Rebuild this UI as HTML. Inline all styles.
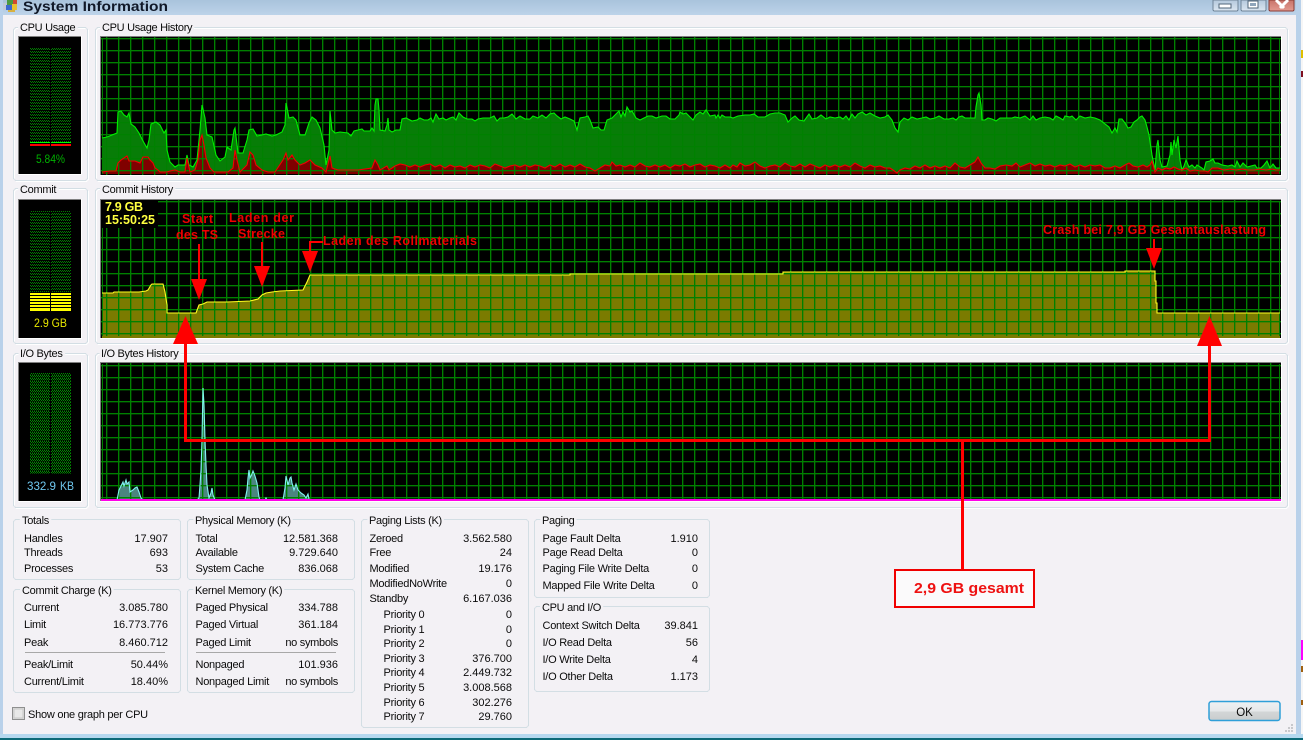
<!DOCTYPE html>
<html><head><meta charset="utf-8"><title>System Information</title>
<style>
html,body{margin:0;padding:0;width:1303px;height:740px;overflow:hidden;background:#f3f1f5}
svg{display:block;position:absolute;left:0;top:0}
text{font-family:"Liberation Sans",Arial,sans-serif;font-size:11px;fill:#0a0a0a;letter-spacing:-.25px}
.r{text-anchor:end;letter-spacing:0}
.t{paint-order:stroke;stroke:#f3f1f5;stroke-width:5px;letter-spacing:-.3px}
.a{font-weight:bold;font-size:12.5px;fill:#f00000;letter-spacing:0}
</style></head><body>
<svg width="1303" height="740" viewBox="0 0 1303 740" shape-rendering="crispEdges">
<defs>
<linearGradient id="tb" x1="0" y1="0" x2="0" y2="1"><stop offset="0" stop-color="#a9c3dc"/><stop offset="1" stop-color="#bdd3e9"/></linearGradient>
<linearGradient id="btn" x1="0" y1="0" x2="0" y2="1"><stop offset="0" stop-color="#eef1f3"/><stop offset=".5" stop-color="#e6e8ea"/><stop offset=".55" stop-color="#d3d6d7"/><stop offset="1" stop-color="#c9cccd"/></linearGradient>
<linearGradient id="wb" x1="0" y1="0" x2="0" y2="1"><stop offset="0" stop-color="#b4c8dc"/><stop offset="1" stop-color="#dbe6f1"/></linearGradient>
<linearGradient id="wr" x1="0" y1="0" x2="0" y2="1"><stop offset="0" stop-color="#c8746a"/><stop offset="1" stop-color="#e39a90"/></linearGradient>
<pattern id="g1" patternUnits="userSpaceOnUse" x="106" y="38" width="12" height="12"><rect x="1" y="0" width="1" height="12" fill="#008000" opacity=".35"/><rect x="0" y="1" width="12" height="1" fill="#008000" opacity=".35"/><rect x="0" y="0" width="1" height="12" fill="#008000"/><rect x="0" y="0" width="12" height="1" fill="#008000"/></pattern>
<pattern id="g2" patternUnits="userSpaceOnUse" x="106" y="201" width="12" height="12"><rect x="1" y="0" width="1" height="12" fill="#008000" opacity=".35"/><rect x="0" y="1" width="12" height="1" fill="#008000" opacity=".35"/><rect x="0" y="0" width="1" height="12" fill="#008000"/><rect x="0" y="0" width="12" height="1" fill="#008000"/></pattern>
<pattern id="g3" patternUnits="userSpaceOnUse" x="106" y="365" width="12" height="12"><rect x="1" y="0" width="1" height="12" fill="#008000" opacity=".35"/><rect x="0" y="1" width="12" height="1" fill="#008000" opacity=".35"/><rect x="0" y="0" width="1" height="12" fill="#008000"/><rect x="0" y="0" width="12" height="1" fill="#008000"/></pattern>
<pattern id="d" patternUnits="userSpaceOnUse" x="0" y="0" width="2" height="3"><rect x="0" y="0" width="1" height="1" fill="#008000"/><rect x="1" y="1" width="1" height="1" fill="#008000"/></pattern>
<pattern id="d2" patternUnits="userSpaceOnUse" x="0" y="0" width="2" height="3"><rect x="0" y="0" width="1" height="1" fill="#009000"/><rect x="1" y="1" width="1" height="1" fill="#009000"/><rect x="0" y="2" width="1" height="1" fill="#005000"/></pattern>
</defs>

<!-- window chrome -->
<rect x="0" y="0" width="1303" height="740" fill="#f3f1f5"/>
<rect x="0" y="0" width="1303" height="15" fill="url(#tb)"/>
<rect x="0" y="0" width="3" height="740" fill="#b9d1ea"/>
<rect x="1296" y="0" width="5" height="740" fill="#b9d1ea"/>
<rect x="1301" y="0" width="2" height="740" fill="#f6f6f6"/>
<rect x="1301" y="50" width="2" height="8" fill="#e0c000"/>
<rect x="1301" y="71" width="2" height="6" fill="#801020"/>
<rect x="1301" y="640" width="2" height="20" fill="#ff00ff"/>
<rect x="1301" y="666" width="2" height="6" fill="#a06010"/>
<rect x="1301" y="700" width="2" height="5" fill="#a06010"/>
<rect x="0" y="734" width="1303" height="4" fill="#b5d8ef"/>
<rect x="0" y="738" width="1303" height="2" fill="#0c6a78"/>

<!-- title icon -->
<rect x="3" y="3" width="5" height="7" fill="#c0c8d8"/>
<rect x="7" y="0" width="6" height="5" fill="#4a9a40"/>
<rect x="13" y="0" width="4" height="4" fill="#d04a30"/>
<rect x="6" y="5" width="6" height="5" fill="#3a6ad0"/>
<rect x="12" y="4" width="5" height="6" fill="#e8c030"/>
<rect x="8" y="10" width="7" height="2" fill="#d8b040"/>
<text x="23" y="11" textLength="145" lengthAdjust="spacingAndGlyphs" style="font-size:14px;font-weight:bold;fill:#101828;letter-spacing:0">System Information</text>

<!-- window buttons -->
<g>
<path d="M1213 0V9q0 2 2 2H1236q2 0 2-2V0Z" fill="url(#wb)" stroke="#6f8498"/>
<rect x="1219" y="4" width="12" height="4" fill="#fff" stroke="#50667a"/>
<path d="M1241 0V9q0 2 2 2H1264q2 0 2-2V0Z" fill="url(#wb)" stroke="#6f8498"/>
<rect x="1248" y="1" width="10" height="7" fill="#fff" stroke="#50667a"/><rect x="1250" y="3" width="6" height="3" fill="#8fa5bb"/>
<path d="M1269 0V9q0 2 2 2H1292q2 0 2-2V0Z" fill="url(#wr)" stroke="#8a3d36"/>
<path d="M1276 0L1284 8M1288 0L1280 8" stroke="#fff" stroke-width="3" fill="none" shape-rendering="auto"/>
</g>

<!-- graph frames -->
<g fill="none" stroke="#fff">
<rect x="14.500" y="28.500" width="74" height="153" rx="3"/>
<rect x="96.500" y="28.500" width="1192" height="153" rx="3"/>
<rect x="14.500" y="189.500" width="74" height="155" rx="3"/>
<rect x="96.500" y="189.500" width="1192" height="155" rx="3"/>
<rect x="14.500" y="354.500" width="74" height="154" rx="3"/>
<rect x="96.500" y="354.500" width="1192" height="154" rx="3"/>
</g>
<g fill="none" stroke="#d3dee4">
<rect x="13.500" y="27.500" width="74" height="153" rx="3"/>
<rect x="95.500" y="27.500" width="1192" height="153" rx="3"/>
<rect x="13.500" y="188.500" width="74" height="155" rx="3"/>
<rect x="95.500" y="188.500" width="1192" height="155" rx="3"/>
<rect x="13.500" y="353.500" width="74" height="154" rx="3"/>
<rect x="95.500" y="353.500" width="1192" height="154" rx="3"/>
</g>
<text class="t" x="20" y="31">CPU Usage</text>
<text class="t" x="102" y="31">CPU Usage History</text>
<text class="t" x="20" y="193">Commit</text>
<text class="t" x="102" y="193">Commit History</text>
<text class="t" x="20" y="357">I/O Bytes</text>
<text class="t" x="101" y="357">I/O Bytes History</text>

<!-- meters -->
<g>
<rect x="18" y="36" width="64" height="139" fill="#fff"/><rect x="18" y="36" width="63" height="138" fill="#808080"/><rect x="19" y="37" width="62" height="137" fill="#000"/>
<rect x="30" y="48" width="20" height="94" fill="url(#d)"/><rect x="51" y="48" width="20" height="94" fill="url(#d)"/>
<rect x="30" y="142" width="20" height="1" fill="#00ff00"/><rect x="51" y="142" width="20" height="1" fill="#00ff00"/>
<rect x="30" y="144" width="20" height="2" fill="#ff0000"/><rect x="51" y="144" width="20" height="2" fill="#ff0000"/>
<text x="36" y="163" textLength="29" lengthAdjust="spacingAndGlyphs" style="font-size:12px;fill:#00b000;letter-spacing:0">5.84%</text>

<rect x="18" y="199" width="64" height="140" fill="#fff"/><rect x="18" y="199" width="63" height="139" fill="#808080"/><rect x="19" y="200" width="62" height="138" fill="#000"/>
<rect x="30" y="211" width="20" height="81" fill="url(#d)"/><rect x="51" y="211" width="20" height="81" fill="url(#d)"/>
<path d="M30 293h20v2H30zM51 293h20v2H51zM30 296h20v2H30zM51 296h20v2H51zM30 299h20v2H30zM51 299h20v2H51zM30 302h20v2H30zM51 302h20v2H51zM30 305h20v2H30zM51 305h20v2H51zM30 308h20v3H30zM51 308h20v3H51z" fill="#ffff00"/>
<text x="34" y="327" textLength="33" lengthAdjust="spacingAndGlyphs" style="font-size:12px;fill:#e8e800;letter-spacing:0">2.9 GB</text>

<rect x="18" y="362" width="64" height="140" fill="#fff"/><rect x="18" y="362" width="63" height="139" fill="#808080"/><rect x="19" y="363" width="62" height="138" fill="#000"/>
<rect x="30" y="373" width="20" height="101" fill="url(#d2)"/><rect x="51" y="373" width="20" height="101" fill="url(#d2)"/>
<text x="27" y="490" textLength="29" lengthAdjust="spacingAndGlyphs" style="font-size:12px;fill:#70c8f0;letter-spacing:0">332.9</text>
<text x="60" y="490" textLength="14" lengthAdjust="spacingAndGlyphs" style="font-size:12px;fill:#70c8f0;letter-spacing:0">KB</text>
</g>

<!-- CPU graph -->
<rect x="100" y="36" width="1182" height="140" fill="#fff"/>
<rect x="100" y="36" width="1181" height="139" fill="#808080"/>
<rect x="101" y="37" width="1180" height="138" fill="#000"/>
<g shape-rendering="auto">
<polygon id="gp" fill="#077d07" points="102,174 102,138 107,137 112,135 117,133 118,112 121,111 124,115 127,117 129,113 131,124 135,127 139,133 143,141 147,148 149,140 151,124 156,122 160,125 164,133 166,130 167,150 170,162 175,167 178,165 181,165 185,165 187,155 189,165 193,167 197,160 200,130 202,105 205,118 207,135 212,137 216,155 220,161 225,157 227,147 231,150 234,130 235,128 238,153 243,153 247,140 249,130 253,129 257,136 262,135 266,134 272,136 276,135 282,132 285,125 286,103 289,118 293,117 296,120 300,135 305,135 309,123 312,117 316,120 320,128 324,145 326,165 329,150 330,111 332,130 335,133 340,132 348,133 351,136 354,131 358,130 362,129 364,131 370,131 372,128 374,131 375,105 376,99 378,99 379,110 380,130 385,131 387,125 388,118 389,130 392,132 396,130 400,130 402,119 406,118 412,121 417,120 420,118 424,120 428,120 431,118 433,122 436,114 439,119 443,118 446,120 450,118 453,117 456,120 459,113 463,117 467,119 472,119 475,121 478,119 483,118 490,118 494,116 497,121 500,118 504,118 508,117 512,114 516,119 520,116 525,119 530,119 533,116 538,118 542,115 546,118 550,114 554,113 557,116 561,119 565,117 570,119 574,121 577,130 580,118 585,117 588,116 590,120 593,128 598,127 601,130 604,130 607,120 612,118 616,114 619,111 621,117 623,112 625,116 627,107 630,112 632,111 636,118 640,120 644,118 648,116 652,116 656,118 662,116 666,116 670,119 675,119 679,115 680,112 683,114 686,113 690,117 693,120 696,115 700,112 703,114 706,110 710,116 715,115 716,118 718,115 720,118 722,115 725,117 730,117 733,118 738,116 745,115 750,115 754,114 758,117 765,117 770,114 775,113 780,113 785,115 788,122 792,118 795,116 799,120 804,121 809,114 812,119 817,118 821,115 826,119 830,117 835,118 840,117 843,119 846,116 849,120 852,114 855,118 858,114 862,112 866,115 870,113 875,116 880,118 885,117 888,115 892,120 895,128 898,132 900,122 904,118 908,120 912,117 917,119 922,118 926,117 930,119 935,118 939,116 944,119 949,119 953,118 956,120 959,117 962,116 965,118 970,118 975,118 976,107 978,95 979,93 981,105 982,120 985,120 988,118 992,119 996,121 1000,118 1006,118 1012,118 1015,117 1020,118 1025,116 1030,120 1033,116 1036,120 1040,118 1045,117 1050,118 1053,120 1056,116 1060,118 1063,120 1065,116 1070,117 1072,116 1076,120 1080,116 1085,118 1090,117 1095,118 1100,120 1105,124 1109,127 1112,133 1115,128 1117,132 1119,119 1122,119 1125,123 1128,128 1131,127 1134,122 1137,120 1140,117 1142,116 1145,120 1147,127 1149,135 1152,155 1155,170 1157,145 1158,140 1160,160 1162,167 1167,166 1170,155 1171,142 1172,155 1174,140 1176,148 1178,136 1180,160 1182,170 1184,166 1186,160 1189,167 1192,165 1195,168 1197,165 1202,168 1204,170 1206,162 1210,161 1213,159 1215,163 1218,163 1222,165 1228,166 1232,165 1235,167 1237,161 1240,167 1243,163 1247,167 1255,165 1257,168 1261,168 1264,165 1267,161 1270,168 1273,164 1276,168 1280,168 1280,174"/>
<polygon fill="#800000" points="102,174 102,172 110,171 116,171 118,163 121,160 124,158 127,156 129,161 135,161 140,163 143,157 148,157 150,160 153,163 155,168 158,170 160,172 164,172 167,172 170,171 175,170 180,172 185,172 187,158 190,172 195,170 198,160 200,140 202,135 204,145 206,158 210,168 214,172 220,172 228,172 233,168 235,150 237,160 240,172 247,165 250,152 253,155 256,165 262,170 268,172 275,172 283,160 286,153 288,160 292,155 295,160 300,165 305,163 310,160 315,165 322,168 326,172 330,156 332,168 338,170 350,170 358,170 372,168 375,160 378,165 380,170 387,166 389,170 395,166 400,164 405,165 410,167 415,165 420,167 425,165 430,164 435,167 440,165 445,168 450,165 455,167 460,166 465,168 470,165 475,167 480,165 485,166 490,168 495,164 500,166 505,168 510,166 515,165 520,167 525,165 530,167 535,165 540,166 545,168 550,165 555,167 560,164 565,167 570,165 575,167 580,164 585,167 590,168 595,171 600,168 605,165 610,166 612,162 616,166 620,165 625,167 630,165 635,167 640,163 645,166 650,167 655,165 660,167 665,165 670,168 675,165 680,166 685,164 690,167 695,165 700,164 705,167 710,165 715,166 720,168 725,165 730,168 733,165 737,167 740,163 745,166 750,165 755,162 760,166 765,168 770,166 775,165 780,167 785,163 790,166 795,167 800,164 805,167 810,164 815,166 820,168 825,165 830,167 835,165 840,167 845,165 850,167 855,163 860,166 865,168 870,165 875,167 880,166 885,168 890,168 893,170 897,173 900,170 905,168 910,169 915,166 920,168 925,165 930,168 935,166 940,168 945,166 950,168 955,163 960,167 965,168 970,165 975,162 978,157 981,163 985,168 990,168 995,169 1000,166 1006,165 1012,166 1016,163 1020,167 1025,165 1030,163 1035,166 1040,164 1045,166 1050,165 1055,167 1060,165 1065,166 1070,164 1075,167 1080,165 1085,167 1090,165 1095,166 1100,165 1105,168 1110,168 1115,166 1120,168 1125,165 1129,163 1133,166 1138,167 1143,165 1147,167 1150,165 1152,161 1155,172 1158,168 1162,170 1166,168 1170,169 1174,167 1178,169 1182,170 1186,168 1190,171 1195,170 1200,171 1205,171 1208,172 1212,168 1218,168 1224,170 1230,169 1236,170 1242,169 1248,170 1254,170 1260,169 1266,170 1272,169 1276,170 1280,170 1280,174"/>
</g>
<rect x="101" y="37" width="1180" height="138" fill="url(#g1)"/>
<rect x="102" y="38" width="1" height="136" fill="#008000"/><rect x="1279" y="38" width="1" height="136" fill="#008000"/>
<g shape-rendering="auto" fill="none" stroke-width="1.100">
<polyline stroke="#00f000" points="102,138 107,137 112,135 117,133 118,112 121,111 124,115 127,117 129,113 131,124 135,127 139,133 143,141 147,148 149,140 151,124 156,122 160,125 164,133 166,130 167,150 170,162 175,167 178,165 181,165 185,165 187,155 189,165 193,167 197,160 200,130 202,105 205,118 207,135 212,137 216,155 220,161 225,157 227,147 231,150 234,130 235,128 238,153 243,153 247,140 249,130 253,129 257,136 262,135 266,134 272,136 276,135 282,132 285,125 286,103 289,118 293,117 296,120 300,135 305,135 309,123 312,117 316,120 320,128 324,145 326,165 329,150 330,111 332,130 335,133 340,132 348,133 351,136 354,131 358,130 362,129 364,131 370,131 372,128 374,131 375,105 376,99 378,99 379,110 380,130 385,131 387,125 388,118 389,130 392,132 396,130 400,130 402,119 406,118 412,121 417,120 420,118 424,120 428,120 431,118 433,122 436,114 439,119 443,118 446,120 450,118 453,117 456,120 459,113 463,117 467,119 472,119 475,121 478,119 483,118 490,118 494,116 497,121 500,118 504,118 508,117 512,114 516,119 520,116 525,119 530,119 533,116 538,118 542,115 546,118 550,114 554,113 557,116 561,119 565,117 570,119 574,121 577,130 580,118 585,117 588,116 590,120 593,128 598,127 601,130 604,130 607,120 612,118 616,114 619,111 621,117 623,112 625,116 627,107 630,112 632,111 636,118 640,120 644,118 648,116 652,116 656,118 662,116 666,116 670,119 675,119 679,115 680,112 683,114 686,113 690,117 693,120 696,115 700,112 703,114 706,110 710,116 715,115 716,118 718,115 720,118 722,115 725,117 730,117 733,118 738,116 745,115 750,115 754,114 758,117 765,117 770,114 775,113 780,113 785,115 788,122 792,118 795,116 799,120 804,121 809,114 812,119 817,118 821,115 826,119 830,117 835,118 840,117 843,119 846,116 849,120 852,114 855,118 858,114 862,112 866,115 870,113 875,116 880,118 885,117 888,115 892,120 895,128 898,132 900,122 904,118 908,120 912,117 917,119 922,118 926,117 930,119 935,118 939,116 944,119 949,119 953,118 956,120 959,117 962,116 965,118 970,118 975,118 976,107 978,95 979,93 981,105 982,120 985,120 988,118 992,119 996,121 1000,118 1006,118 1012,118 1015,117 1020,118 1025,116 1030,120 1033,116 1036,120 1040,118 1045,117 1050,118 1053,120 1056,116 1060,118 1063,120 1065,116 1070,117 1072,116 1076,120 1080,116 1085,118 1090,117 1095,118 1100,120 1105,124 1109,127 1112,133 1115,128 1117,132 1119,119 1122,119 1125,123 1128,128 1131,127 1134,122 1137,120 1140,117 1142,116 1145,120 1147,127 1149,135 1152,155 1155,170 1157,145 1158,140 1160,160 1162,167 1167,166 1170,155 1171,142 1172,155 1174,140 1176,148 1178,136 1180,160 1182,170 1184,166 1186,160 1189,167 1192,165 1195,168 1197,165 1202,168 1204,170 1206,162 1210,161 1213,159 1215,163 1218,163 1222,165 1228,166 1232,165 1235,167 1237,161 1240,167 1243,163 1247,167 1255,165 1257,168 1261,168 1264,165 1267,161 1270,168 1273,164 1276,168 1280,168"/>
<polyline stroke="#f00000" points="102,172 110,171 116,171 118,163 121,160 124,158 127,156 129,161 135,161 140,163 143,157 148,157 150,160 153,163 155,168 158,170 160,172 164,172 167,172 170,171 175,170 180,172 185,172 187,158 190,172 195,170 198,160 200,140 202,135 204,145 206,158 210,168 214,172 220,172 228,172 233,168 235,150 237,160 240,172 247,165 250,152 253,155 256,165 262,170 268,172 275,172 283,160 286,153 288,160 292,155 295,160 300,165 305,163 310,160 315,165 322,168 326,172 330,156 332,168 338,170 350,170 358,170 372,168 375,160 378,165 380,170 387,166 389,170 395,166 400,164 405,165 410,167 415,165 420,167 425,165 430,164 435,167 440,165 445,168 450,165 455,167 460,166 465,168 470,165 475,167 480,165 485,166 490,168 495,164 500,166 505,168 510,166 515,165 520,167 525,165 530,167 535,165 540,166 545,168 550,165 555,167 560,164 565,167 570,165 575,167 580,164 585,167 590,168 595,171 600,168 605,165 610,166 612,162 616,166 620,165 625,167 630,165 635,167 640,163 645,166 650,167 655,165 660,167 665,165 670,168 675,165 680,166 685,164 690,167 695,165 700,164 705,167 710,165 715,166 720,168 725,165 730,168 733,165 737,167 740,163 745,166 750,165 755,162 760,166 765,168 770,166 775,165 780,167 785,163 790,166 795,167 800,164 805,167 810,164 815,166 820,168 825,165 830,167 835,165 840,167 845,165 850,167 855,163 860,166 865,168 870,165 875,167 880,166 885,168 890,168 893,170 897,173 900,170 905,168 910,169 915,166 920,168 925,165 930,168 935,166 940,168 945,166 950,168 955,163 960,167 965,168 970,165 975,162 978,157 981,163 985,168 990,168 995,169 1000,166 1006,165 1012,166 1016,163 1020,167 1025,165 1030,163 1035,166 1040,164 1045,166 1050,165 1055,167 1060,165 1065,166 1070,164 1075,167 1080,165 1085,167 1090,165 1095,166 1100,165 1105,168 1110,168 1115,166 1120,168 1125,165 1129,163 1133,166 1138,167 1143,165 1147,167 1150,165 1152,161 1155,172 1158,168 1162,170 1166,168 1170,169 1174,167 1178,169 1182,170 1186,168 1190,171 1195,170 1200,171 1205,171 1208,172 1212,168 1218,168 1224,170 1230,169 1236,170 1242,169 1248,170 1254,170 1260,169 1266,170 1272,169 1276,170 1280,170"/>
</g>

<!-- Commit graph -->
<rect x="100" y="199" width="1182" height="140" fill="#fff"/>
<rect x="100" y="199" width="1181" height="139" fill="#808080"/>
<rect x="101" y="200" width="1180" height="138" fill="#000"/>
<polygon shape-rendering="auto" fill="#7b7b00" points="102,338 102,293 113,293 114,292 139,292 146,291 148,290 151,285 152,284 163,284 165,292 167,305 167,313 196,313 199,305 203,304 207,302 227,302 250,301 258,299 262,295 266,293 272,292 280,291 303,290 307,282 310,275 570,275 570,274 783,274 783,272 1125,272 1125,271 1155,271 1155,281 1156,281 1156,303 1157,303 1157,313 1280,313 1280,338"/>
<rect x="101" y="200" width="1180" height="136" fill="url(#g2)"/>
<rect x="102" y="201" width="1" height="135" fill="#008000"/><rect x="1279" y="201" width="1" height="135" fill="#008000"/>
<polyline shape-rendering="auto" fill="none" stroke="#ffff20" stroke-width="1.100" points="102,293 113,293 114,292 139,292 146,291 148,290 151,285 152,284 163,284 165,292 167,305 167,313 196,313 199,305 203,304 207,302 227,302 250,301 258,299 262,295 266,293 272,292 280,291 303,290 307,282 310,275 570,275 570,274 783,274 783,272 1125,272 1125,271 1155,271 1155,281 1156,281 1156,303 1157,303 1157,313 1280,313"/>
<rect x="101" y="200" width="57" height="28" fill="#000"/>
<text x="105" y="211" textLength="38" style="font-size:12.500px;font-weight:bold;fill:#ffff40;letter-spacing:0">7.9 GB</text>
<text x="105" y="224" textLength="50" style="font-size:12.500px;font-weight:bold;fill:#ffff40;letter-spacing:0">15:50:25</text>

<!-- IO graph -->
<rect x="100" y="362" width="1182" height="140" fill="#fff"/>
<rect x="100" y="362" width="1181" height="139" fill="#808080"/>
<rect x="101" y="363" width="1180" height="138" fill="#000"/>
<g shape-rendering="auto" fill="#4b8580">
<polygon points="117,500 119,490 121,486 123,482 124,486 126,480 127,484 129,482 130,492 133,490 135,488 137,487 139,492 141,498 143,500"/>
<polygon points="197,500 199,498 200,485 201,470 202,440 203,388 204,405 205,440 206,465 207,485 209,498 211,493 212,488 213,495 215,500"/>
<polygon points="245,500 247,490 248,478 249,470 250,478 252,474 253,471 255,476 257,483 258,490 259,497 260,500"/>
<polygon points="283,500 285,488 286,476 288,485 290,478 291,477 292,483 294,490 296,484 298,490 301,493 304,495 306,498 308,494 309,499 310,500"/>
</g>
<rect x="101" y="363" width="1180" height="137" fill="url(#g3)"/>
<rect x="102" y="364" width="1" height="136" fill="#008000"/><rect x="1279" y="364" width="1" height="136" fill="#008000"/>
<g shape-rendering="auto" fill="none" stroke="#80f4f0" stroke-width="1.100">
<polyline points="117,500 119,490 121,486 123,482 124,486 126,480 127,484 129,482 130,492 133,490 135,488 137,487 139,492 141,498 143,500"/>
<polyline points="197,500 199,498 200,485 201,470 202,440 203,388 204,405 205,440 206,465 207,485 209,498 211,493 212,488 213,495 215,500"/>
<polyline points="245,500 247,490 248,478 249,470 250,478 252,474 253,471 255,476 257,483 258,490 259,497 260,500"/>
<polyline points="265,500 266,498 267,500"/>
<polyline points="283,500 285,488 286,476 288,485 290,478 291,477 292,483 294,490 296,484 298,490 301,493 304,495 306,498 308,494 309,499 310,500"/>
</g>
<rect x="101" y="499" width="1180" height="2" fill="#ff00e8"/>

<!-- stat frames -->
<g fill="none" stroke="#d3dee4">
<rect x="13.500" y="519.500" width="167" height="60" rx="3"/>
<rect x="187.500" y="519.500" width="167" height="60" rx="3"/>
<rect x="13.500" y="589.500" width="167" height="103" rx="3"/>
<rect x="187.500" y="589.500" width="167" height="103" rx="3"/>
<rect x="361.500" y="519.500" width="167" height="208" rx="3"/>
<rect x="534.500" y="519.500" width="175" height="78" rx="3"/>
<rect x="534.500" y="606.500" width="175" height="85" rx="3"/>
</g>
<text class="t" x="22" y="524">Totals</text>
<text class="t" x="195" y="524">Physical Memory (K)</text>
<text class="t" x="22" y="594">Commit Charge (K)</text>
<text class="t" x="195" y="594">Kernel Memory (K)</text>
<text class="t" x="369" y="524">Paging Lists (K)</text>
<text class="t" x="542" y="524">Paging</text>
<text class="t" x="542" y="611">CPU and I/O</text>

<!-- Totals -->
<text x="24" y="542">Handles</text><text class="r" x="168" y="542">17.907</text>
<text x="24" y="556">Threads</text><text class="r" x="168" y="556">693</text>
<text x="24" y="572">Processes</text><text class="r" x="168" y="572">53</text>
<!-- Physical -->
<text x="195.500" y="542">Total</text><text class="r" x="338" y="542">12.581.368</text>
<text x="195.500" y="556">Available</text><text class="r" x="338" y="556">9.729.640</text>
<text x="195.500" y="572">System Cache</text><text class="r" x="338" y="572">836.068</text>
<!-- Commit -->
<text x="24" y="611">Current</text><text class="r" x="168" y="611">3.085.780</text>
<text x="24" y="628">Limit</text><text class="r" x="168" y="628">16.773.776</text>
<text x="24" y="646">Peak</text><text class="r" x="168" y="646">8.460.712</text>
<rect x="25" y="652" width="140" height="1" fill="#a8a8a8"/>
<text x="24" y="668">Peak/Limit</text><text class="r" x="168" y="668">50.44%</text>
<text x="24" y="685">Current/Limit</text><text class="r" x="168" y="685">18.40%</text>
<!-- Kernel -->
<text x="195.500" y="611">Paged Physical</text><text class="r" x="338" y="611">334.788</text>
<text x="195.500" y="628">Paged Virtual</text><text class="r" x="338" y="628">361.184</text>
<text x="195.500" y="646">Paged Limit</text><text class="r" x="338" y="646" style="letter-spacing:-.3px">no symbols</text>
<rect x="196" y="652" width="140" height="1" fill="#a8a8a8"/>
<text x="195.500" y="668">Nonpaged</text><text class="r" x="338" y="668">101.936</text>
<text x="195.500" y="685">Nonpaged Limit</text><text class="r" x="338" y="685" style="letter-spacing:-.3px">no symbols</text>
<!-- Paging lists -->
<text x="369.500" y="542">Zeroed</text><text class="r" x="512" y="542">3.562.580</text>
<text x="369.500" y="556">Free</text><text class="r" x="512" y="556">24</text>
<text x="369.500" y="572">Modified</text><text class="r" x="512" y="572">19.176</text>
<text x="369.500" y="587">ModifiedNoWrite</text><text class="r" x="512" y="587">0</text>
<text x="369.500" y="602">Standby</text><text class="r" x="512" y="602">6.167.036</text>
<text x="383.500" y="618">Priority 0</text><text class="r" x="512" y="618">0</text>
<text x="383.500" y="633">Priority 1</text><text class="r" x="512" y="633">0</text>
<text x="383.500" y="647">Priority 2</text><text class="r" x="512" y="647">0</text>
<text x="383.500" y="662">Priority 3</text><text class="r" x="512" y="662">376.700</text>
<text x="383.500" y="676">Priority 4</text><text class="r" x="512" y="676">2.449.732</text>
<text x="383.500" y="691">Priority 5</text><text class="r" x="512" y="691">3.008.568</text>
<text x="383.500" y="706">Priority 6</text><text class="r" x="512" y="706">302.276</text>
<text x="383.500" y="720">Priority 7</text><text class="r" x="512" y="720">29.760</text>
<!-- Paging -->
<text x="542.500" y="542">Page Fault Delta</text><text class="r" x="698" y="542">1.910</text>
<text x="542.500" y="556">Page Read Delta</text><text class="r" x="698" y="556">0</text>
<text x="542.500" y="572">Paging File Write Delta</text><text class="r" x="698" y="572">0</text>
<text x="542.500" y="589">Mapped File Write Delta</text><text class="r" x="698" y="589">0</text>
<!-- CPU and IO -->
<text x="542.500" y="629">Context Switch Delta</text><text class="r" x="698" y="629">39.841</text>
<text x="542.500" y="646">I/O Read Delta</text><text class="r" x="698" y="646">56</text>
<text x="542.500" y="663">I/O Write Delta</text><text class="r" x="698" y="663">4</text>
<text x="542.500" y="680">I/O Other Delta</text><text class="r" x="698" y="680">1.173</text>

<!-- checkbox -->
<rect x="12.500" y="707.500" width="12" height="12" fill="#dcdcdc" stroke="#8e8f8f"/>
<rect x="14" y="709" width="9" height="9" fill="#e8e8e8" stroke="#c8c8c8"/>
<text x="28" y="718">Show one graph per CPU</text>

<!-- OK button -->
<rect x="1209" y="701.500" width="71" height="19" rx="2.500" fill="url(#btn)" stroke="#2f9fd8" stroke-width="1.500" shape-rendering="auto"/>
<text x="1244.500" y="716" text-anchor="middle" style="font-size:11.500px;letter-spacing:0">OK</text>

<!-- grip -->
<path d="M1291 724h2v2h-2zM1288 727h2v2h-2zM1291 727h2v2h-2zM1285 730h2v2h-2zM1288 730h2v2h-2zM1291 730h2v2h-2z" fill="#c8c8cc"/>

<!-- annotations -->
<g fill="#ff0000">
<rect x="184" y="344" width="3" height="97"/>
<rect x="184" y="439" width="1027" height="3"/>
<rect x="1208" y="345" width="3" height="97"/>
<rect x="961" y="441" width="3" height="128"/>
<polygon points="185.500,316 198,344 173,344" shape-rendering="auto"/>
<polygon points="1209.500,316 1222,346 1197,346" shape-rendering="auto"/>
<rect x="198" y="244" width="2" height="36"/>
<polygon points="191,279 207,279 199,300" shape-rendering="auto"/>
<rect x="261" y="242" width="2" height="25"/>
<polygon points="254,266 270,266 262,287" shape-rendering="auto"/>
<path d="M309 241h14v2h-12v10h-2z"/>
<polygon points="302,251 318,251 310,272" shape-rendering="auto"/>
<rect x="1153" y="239" width="2" height="10"/>
<polygon points="1146,248 1162,248 1154,269" shape-rendering="auto"/>
</g>
<rect x="895" y="570" width="139" height="37" fill="#fbfafb" stroke="#f00000" stroke-width="2"/>
<g shape-rendering="auto">
<text x="914" y="593" textLength="110" lengthAdjust="spacingAndGlyphs" style="font-size:15px;font-weight:bold;fill:#ee1111;letter-spacing:0">2,9 GB gesamt</text>
<text class="a" x="182" y="223" textLength="31">Start</text>
<text class="a" x="176" y="239" textLength="42">des TS</text>
<text class="a" x="229" y="222" textLength="65">Laden der</text>
<text class="a" x="238" y="238" textLength="47">Strecke</text>
<text class="a" x="323" y="245" textLength="154">Laden des Rollmaterials</text>
<text class="a" x="1043" y="234" textLength="223">Crash bei 7,9 GB Gesamtauslastung</text>
</g>
</svg>
</body></html>
